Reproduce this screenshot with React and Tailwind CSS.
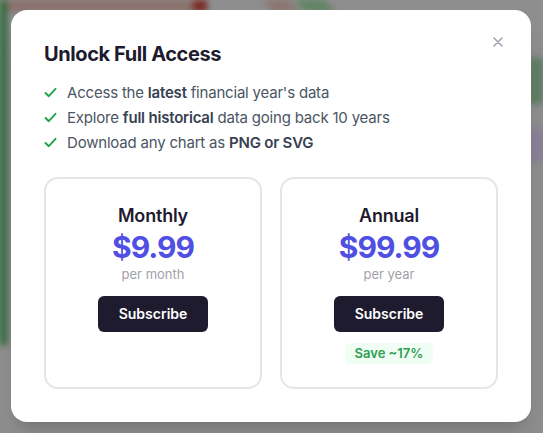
import React from 'react';

const Check = () => (
  <svg width="13" height="13" viewBox="0 0 13 13" fill="none" className="shrink-0">
    <path d="M1.5 7 L4.8 10.2 L11.5 2.8" stroke="#22a24a" strokeWidth="1.9" strokeLinecap="round" strokeLinejoin="round" />
  </svg>
);

const PlanCard = ({ title, price, period, badge }) => (
  <div className="flex flex-col items-center rounded-[14px] border-2 border-[#e5e5ea] bg-white pt-[23px] pb-[23px]">
    <h3 className="text-lg leading-7 font-semibold tracking-[-0.2px] text-[#1e1b2e]">{title}</h3>
    <div className="text-[30px] leading-[34px] font-bold tracking-[-1px] text-[#4f4fe3]">{price}</div>
    <div className="text-[13px] leading-5 text-[#a1a1aa]">{period}</div>
    <button className="mt-3 h-9 w-[110px] rounded-md bg-[#1e1b2e] text-sm font-semibold text-white">
      Subscribe
    </button>
    {badge && (
      <span className="mt-[11px] rounded-md bg-[#f0fdf4] px-2.5 py-0.5 text-[13px] leading-[17px] font-semibold text-[#2f9e4f]">
        {badge}
      </span>
    )}
  </div>
);

export default function App() {
  return (
    <div className="relative h-[433px] w-full overflow-hidden bg-[#8e8e8e] font-['Inter',sans-serif]">
      {/* blurred page behind the dialog */}
      <div className="absolute inset-0 blur-[3px]">
        <div className="absolute left-0 top-0 h-[345px] w-[7px] bg-[#2b6a38]" />
        <div className="absolute left-[7px] top-0 h-[12px] w-[188px] bg-[#8a706c]" />
        <div className="absolute left-[193px] top-0 h-[12px] w-[14px] bg-[#7a2a22]" />
        <div className="absolute left-[268px] top-0 h-[12px] w-[26px] skew-x-[45deg] bg-[#8b7570]" />
        <div className="absolute left-[300px] top-0 h-[12px] w-[30px] skew-x-[45deg] bg-[#5f8464]" />
        <div className="absolute right-0 top-[58px] h-[46px] w-[14px] bg-[#5d7d60]" />
        <div className="absolute right-0 top-[128px] h-[34px] w-[14px] bg-[#8a7f98]" />
      </div>

      <div className="relative pl-[11px] pt-[10px]">
        <div className="relative w-[520px] rounded-2xl bg-white px-[33px] pt-[30px] pb-[33px] shadow-xl">
          <button className="absolute right-[27px] top-[26px] flex h-[12px] w-[12px] items-center justify-center">
            <svg width="10" height="10" viewBox="0 0 10 10">
              <path d="M1 1 L9 9 M9 1 L1 9" stroke="#9ca3af" strokeWidth="1.6" strokeLinecap="round" />
            </svg>
          </button>

          <h2 className="text-xl leading-7 font-bold tracking-[-0.4px] text-[#1e1b2e]">Unlock Full Access</h2>

          <ul className="mt-3 text-[15px] leading-[25px] tracking-[-0.2px] text-[#4b5563]">
            <li className="flex items-center gap-[10px]">
              <Check />
              <span>
                Access the <strong className="font-semibold text-[#374151]">latest</strong> financial year's data
              </span>
            </li>
            <li className="flex items-center gap-[10px]">
              <Check />
              <span>
                Explore <strong className="font-semibold text-[#374151]">full historical</strong> data going back 10 years
              </span>
            </li>
            <li className="flex items-center gap-[10px]">
              <Check />
              <span>
                Download any chart as <strong className="font-semibold text-[#374151]">PNG or SVG</strong>
              </span>
            </li>
          </ul>

          <div className="mt-[22px] grid grid-cols-2 gap-[18px]">
            <PlanCard title="Monthly" price="$9.99" period="per month" />
            <PlanCard title="Annual" price="$99.99" period="per year" badge="Save ~17%" />
          </div>
        </div>
      </div>
    </div>
  );
}
